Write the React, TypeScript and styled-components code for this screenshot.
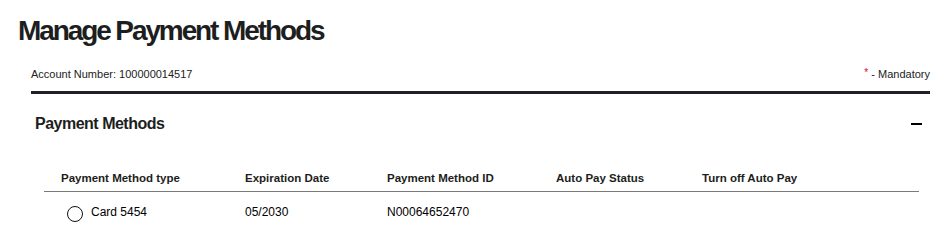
import styled, { createGlobalStyle } from "styled-components";

const GlobalStyle = createGlobalStyle`
  body {
    margin: 0;
    background: #fff;
    font-family: "Liberation Sans", Arial, sans-serif;
    color: #000;
  }
`;

const columns = [
  { label: "Payment Method type", width: 184 },
  { label: "Expiration Date", width: 142 },
  { label: "Payment Method ID", width: 169 },
  { label: "Auto Pay Status", width: 146 },
  { label: "Turn off Auto Pay", width: 0 },
];

const rows = [
  { type: "Card 5454", expires: "05/2030", id: "N00064652470", status: "", turnOff: "" },
];

export default function App() {
  return (
    <>
      <GlobalStyle />
      <Page>
        <Title>Manage Payment Methods</Title>
        <Content>
          <AccountBar>
            <SmallText>Account Number: 100000014517</SmallText>
            <SmallText>
              <Asterisk>*</Asterisk> - Mandatory
            </SmallText>
          </AccountBar>
          <Section>
            <SectionHeader>
              <SectionTitle>Payment Methods</SectionTitle>
              <CollapseIcon aria-label="Collapse" />
            </SectionHeader>
            <Table>
              <thead>
                <tr>
                  {columns.map((c) => (
                    <HeadCell key={c.label} $width={c.width}>
                      {c.label}
                    </HeadCell>
                  ))}
                </tr>
              </thead>
              <tbody>
                {rows.map((r) => (
                  <tr key={r.id}>
                    <BodyCell>
                      <RadioLabel>
                        <Radio type="radio" name="method" />
                        <span>{r.type}</span>
                      </RadioLabel>
                    </BodyCell>
                    <BodyCell>{r.expires}</BodyCell>
                    <BodyCell>{r.id}</BodyCell>
                    <BodyCell>{r.status}</BodyCell>
                    <BodyCell>{r.turnOff}</BodyCell>
                  </tr>
                ))}
              </tbody>
            </Table>
          </Section>
        </Content>
      </Page>
    </>
  );
}

const Page = styled("main")`
  padding-top: 15px;
`;

const Title = styled("h1")`
  margin: 0;
  padding-left: 18px;
  font-size: 28px;
  line-height: 32px;
  font-weight: 700;
  letter-spacing: -2.1px;
  color: #1d1e20;
`;

const Content = styled("div")`
  padding: 19px 19px 0 31px;
`;

const AccountBar = styled("div")`
  display: flex;
  justify-content: space-between;
  align-items: flex-end;
  padding-bottom: 10px;
  border-bottom: 3px solid #1f2124;
`;

const SmallText = styled("span")`
  font-size: 11px;
  line-height: 14px;
  color: #222;
`;

const Asterisk = styled("span")`
  color: #e0002a;
  font-size: 10px;
  vertical-align: 2px;
`;

const Section = styled("section")`
  padding-top: 20px;
`;

const SectionHeader = styled("div")`
  display: flex;
  justify-content: space-between;
  align-items: center;
  padding: 0 8px 0 4px;
`;

const SectionTitle = styled("h2")`
  margin: 0;
  font-size: 16px;
  line-height: 20px;
  font-weight: 700;
  letter-spacing: -0.5px;
  color: #1d1e20;
`;

const CollapseIcon = styled("span")`
  display: block;
  width: 11px;
  height: 2px;
  background: #000;
`;

const Table = styled("table")`
  margin: 36px 11px 0 13px;
  width: calc(100% - 24px);
  border-collapse: collapse;
  table-layout: fixed;
`;

const HeadCell = styled("th")<{ $width: number }>`
  width: ${(p) => (p.$width ? `${p.$width - 17}px` : "auto")};
  padding: 0 0 5px 17px;
  text-align: left;
  font-size: 11.5px;
  line-height: 16px;
  font-weight: 700;
  color: #1d1e20;
  border-bottom: 1px solid #7a7a7a;
`;

const BodyCell = styled("td")`
  padding: 12px 0 0 17px;
  font-size: 12px;
  line-height: 16px;
  color: #000;
  vertical-align: top;
`;

const RadioLabel = styled("label")`
  display: flex;
  align-items: flex-start;
  gap: 8px;
  padding-left: 6px;
`;

const Radio = styled("input")`
  appearance: none;
  margin: 2px 0 0;
  width: 16px;
  height: 16px;
  border: 1.3px solid #111;
  border-radius: 50%;
  background: #fff;
  box-sizing: border-box;
`;
